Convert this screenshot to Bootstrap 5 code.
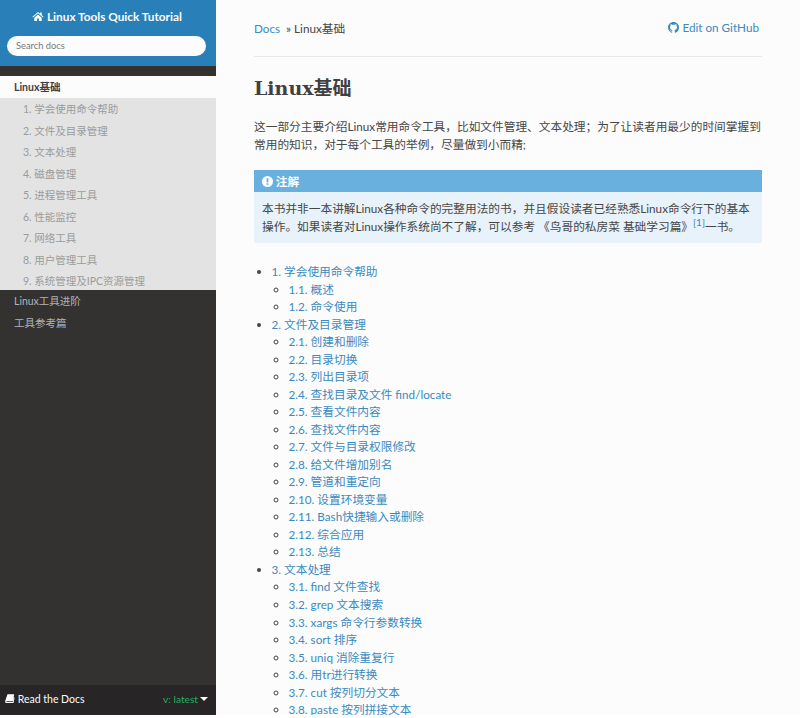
<!DOCTYPE html>
<html lang="zh">
<head>
<meta charset="utf-8">
<title>Linux基础</title>
<link href="https://cdn.jsdelivr.net/npm/bootstrap@5.3.0/dist/css/bootstrap.min.css" rel="stylesheet">
<style>
html,body{height:718px;overflow:hidden;background:#fff}
body{font-family:Lato,"Noto Sans CJK SC",sans-serif;font-size:11.7px;color:#464646}
.shell{height:715px}
.side{width:216px;background:#343131;flex:none;position:relative;color:#d9d9d9;font-size:10.5px}
.side-top{background:#2980b9;height:66px;padding-top:8px;text-align:center}
.brand{color:#fcfcfc;font-weight:700;font-size:11.8px;line-height:17px;display:block;text-decoration:none;margin-right:2px}
.brand svg{width:12px;height:11px;vertical-align:-1px}
.search-box{width:199px;height:20px;margin:11px 0 0 7px;border-radius:10px;background:#fcfcfc;text-align:left;padding:0 9px;font-size:9.3px;line-height:20px;color:#77787a}
.side-menu{margin-top:10px;line-height:23px}
.menu-cur{background:#fcfcfc;color:#404040;font-weight:700;padding-left:14px;height:22px}
.menu-sub{color:#9b9b9b;padding-left:23px;height:21.5px}
.menu-top{padding-left:14px;color:#b3b3b3;height:21.7px}
.menu-subs{height:192px;background:#e3e3e3;overflow:hidden}
.ver{position:absolute;left:0;right:0;bottom:0;height:30px;background:#272525;display:flex;justify-content:space-between;align-items:center;padding:0 8px 0 5px;color:#fcfcfc;font-size:10.5px}
.ver svg{width:10px;height:11px;vertical-align:-1px}
.ver-tag{color:#27ae60;font-size:10.2px}
.caret{display:inline-block;border:4px solid transparent;border-top-color:#fcfcfc;border-bottom:0;vertical-align:2px;margin-left:2px}
.main{flex:1;background:#fcfcfc;padding:20px 38px 0 38px;min-width:0;overflow:hidden}
.crumbs{height:37px;border-bottom:1px solid #e7e7e7;display:flex;justify-content:space-between;line-height:16px}
.crumbs a,.main a{color:#3a8abf;text-decoration:none}
.crumb-right svg{width:11px;height:11px;vertical-align:-1px}
.crumb-right{margin-right:3px;margin-top:-1px}
.main h1{font-family:"DejaVu Serif","Noto Sans CJK SC",serif;font-weight:700;font-size:19px;color:#404040;margin:17px 0 0;line-height:28px;height:28px}
.intro{margin:16px 0 0;line-height:17.6px;height:35px}
.note{margin-top:17px;background:#e7f2fa}
.note-head{background:#6ab0de;color:#fff;font-weight:700;height:22px;line-height:22px;padding-left:8px}
.note-head svg{width:11px;height:11px;vertical-align:-1px}
.note-body{padding:8px 8px 8px;line-height:17.6px}
.note-body sup{font-size:10px}
.toc{margin:20px 0 0;padding-left:17.5px;line-height:17.52px}
.toc ul{padding-left:17px;list-style:circle}
</style>
</head>
<body>
<div class="d-flex shell">
<nav class="side">
<div class="side-top">
<a class="brand" href="#"><svg viewBox="0 0 26 22" fill="#fcfcfc"><path d="M13 1 1 11.500l1.300 1.500L13 3.800 23.700 13l1.300-1.500-4-3.500V2.500h-3.500v2.500zM5 13.500V21h6v-5.500h4V21h6v-7.500l-8-6.800z"/></svg> Linux Tools Quick Tutorial</a>
<div class="search-box">Search docs</div>
</div>
<div class="side-menu">
<div class="menu-cur">Linux基础</div>
<div class="menu-subs">
<div class="menu-sub">1. 学会使用命令帮助</div>
<div class="menu-sub">2. 文件及目录管理</div>
<div class="menu-sub">3. 文本处理</div>
<div class="menu-sub">4. 磁盘管理</div>
<div class="menu-sub">5. 进程管理工具</div>
<div class="menu-sub">6. 性能监控</div>
<div class="menu-sub">7. 网络工具</div>
<div class="menu-sub">8. 用户管理工具</div>
<div class="menu-sub">9. 系统管理及IPC资源管理</div>
</div>
<div class="menu-top">Linux工具进阶</div>
<div class="menu-top">工具参考篇</div>
</div>
<div class="ver">
<span><svg viewBox="0 0 24 24" fill="#fcfcfc"><path d="M6 2h16l-3 16H4c-1 0-1.500 2 0 2h15l2-11 2 1-2.500 13H4C0 23 0 19 1 16z"/></svg> Read the Docs</span>
<span class="ver-tag">v: latest<span class="caret"></span></span>
</div>
</nav>
<main class="main">
<div class="crumbs">
<div><a href="#">Docs</a> &nbsp;» Linux基础</div>
<div class="crumb-right"><a href="#"><svg viewBox="0 0 16 16" fill="#3a8abf"><path d="M8 0C3.580 0 0 3.580 0 8c0 3.540 2.290 6.530 5.470 7.590.4.070.55-.17.55-.38 0-.19-.01-.82-.01-1.490-2.010.37-2.530-.49-2.690-.94-.09-.23-.48-.94-.82-1.130-.28-.15-.68-.52-.01-.53.63-.01 1.080.58 1.230.82.72 1.210 1.870.87 2.330.66.070-.52.280-.87.510-1.070-1.780-.2-3.640-.89-3.640-3.950 0-.87.310-1.590.820-2.150-.08-.2-.36-1.020.08-2.120 0 0 .67-.21 2.200.82.640-.18 1.320-.27 2-.27s1.360.09 2 .27c1.530-1.040 2.200-.82 2.200-.82.44 1.100.16 1.920.08 2.120.51.56.82 1.270.82 2.150 0 3.070-1.870 3.750-3.650 3.950.29.25.54.73.54 1.480 0 1.070-.01 1.930-.01 2.200 0 .21.15.46.55.38A8.010 8.010 0 0 0 16 8c0-4.420-3.580-8-8-8z"/></svg> Edit on GitHub</a></div>
</div>
<h1>Linux基础</h1>
<p class="intro">这一部分主要介绍Linux常用命令工具，比如文件管理、文本处理；为了让读者用最少的时间掌握到常用的知识，对于每个工具的举例，尽量做到小而精;</p>
<div class="note">
<div class="note-head"><svg viewBox="0 0 24 24"><circle cx="12" cy="12" r="12" fill="#fff"/><rect x="10" y="5" width="4" height="9" fill="#6ab0de"/><rect x="10" y="16" width="4" height="3.500" fill="#6ab0de"/></svg> 注解</div>
<div class="note-body">本书并非一本讲解Linux各种命令的完整用法的书，并且假设读者已经熟悉Linux命令行下的基本操作。如果读者对Linux操作系统尚不了解，可以参考 《鸟哥的私房菜 基础学习篇》<sup><a href="#">[1]</a></sup>一书。</div>
</div>
<ul class="toc">
<li><a href="#">1. 学会使用命令帮助</a>
<ul><li><a href="#">1.1. 概述</a></li><li><a href="#">1.2. 命令使用</a></li></ul></li>
<li><a href="#">2. 文件及目录管理</a>
<ul><li><a href="#">2.1. 创建和删除</a></li><li><a href="#">2.2. 目录切换</a></li><li><a href="#">2.3. 列出目录项</a></li><li><a href="#">2.4. 查找目录及文件 find/locate</a></li><li><a href="#">2.5. 查看文件内容</a></li><li><a href="#">2.6. 查找文件内容</a></li><li><a href="#">2.7. 文件与目录权限修改</a></li><li><a href="#">2.8. 给文件增加别名</a></li><li><a href="#">2.9. 管道和重定向</a></li><li><a href="#">2.10. 设置环境变量</a></li><li><a href="#">2.11. Bash快捷输入或删除</a></li><li><a href="#">2.12. 综合应用</a></li><li><a href="#">2.13. 总结</a></li></ul></li>
<li><a href="#">3. 文本处理</a>
<ul><li><a href="#">3.1. find 文件查找</a></li><li><a href="#">3.2. grep 文本搜索</a></li><li><a href="#">3.3. xargs 命令行参数转换</a></li><li><a href="#">3.4. sort 排序</a></li><li><a href="#">3.5. uniq 消除重复行</a></li><li><a href="#">3.6. 用tr进行转换</a></li><li><a href="#">3.7. cut 按列切分文本</a></li><li><a href="#">3.8. paste 按列拼接文本</a></li></ul></li>
</ul>
</main>
</div>
</body>
</html>
